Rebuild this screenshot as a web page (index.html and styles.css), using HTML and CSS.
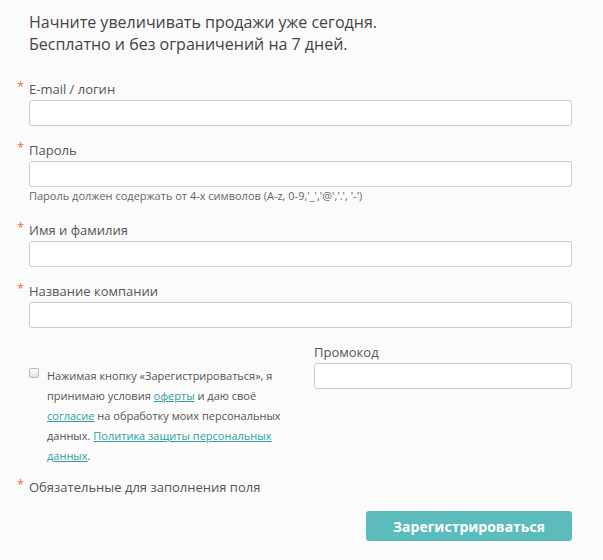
FILE: index.html
```html
<!DOCTYPE html>
<html lang="ru">
<head>
<meta charset="utf-8">
<title>Регистрация</title>
<link rel="stylesheet" href="styles.css">
</head>
<body>
<form class="reg">
  <h1 class="reg-title">Начните увеличивать продажи уже сегодня.<br>Бесплатно и без ограничений на 7 дней.</h1>

  <div class="field">
    <label class="label"><span class="req">*</span>E-mail / логин</label>
    <input class="input" type="text">
  </div>

  <div class="field">
    <label class="label"><span class="req">*</span>Пароль</label>
    <input class="input" type="password">
    <div class="hint">Пароль должен содержать от 4-х символов (A-z, 0-9,'_','@','.', '-')</div>
  </div>

  <div class="field">
    <label class="label"><span class="req">*</span>Имя и фамилия</label>
    <input class="input" type="text">
  </div>

  <div class="field">
    <label class="label"><span class="req">*</span>Название компании</label>
    <input class="input" type="text">
  </div>

  <div class="split">
    <div class="agree">
      <span class="check"></span>
      <p class="agree-text">Нажимая кнопку «Зарегистрироваться», я принимаю условия <a href="#">оферты</a> и даю своё <a href="#">согласие</a> на обработку моих персональных данных. <a href="#">Политика защиты персональных данных</a>.</p>
    </div>
    <div class="field promo">
      <label class="label">Промокод</label>
      <input class="input" type="text">
    </div>
  </div>

  <p class="required"><span class="req">*</span>Обязательные для заполнения поля</p>

  <div class="actions">
    <button class="btn" type="button">Зарегистрироваться</button>
  </div>
</form>
</body>
</html>
```

FILE: styles.css
```css
html, body {
  margin: 0;
  padding: 0;
  background: #fbfbfb;
}
body {
  font-family: "Open Sans", "Liberation Sans", sans-serif;
  color: #555;
}
.reg {
  width: 543px;
  padding: 11px 31px 0 29px;
}
.reg-title {
  margin: 0 0 25px;
  font-size: 16px;
  line-height: 22px;
  font-weight: 400;
  color: #444;
}
.field {
  display: flex;
  flex-direction: column;
  margin-bottom: 15px;
}
.label {
  font-size: 13px;
  line-height: 18px;
  margin-bottom: 2px;
  color: #555;
}
.req {
  display: inline-block;
  width: 12px;
  margin-left: -12px;
  color: #f26b4a;
  font-size: 13px;
  line-height: 13px;
  vertical-align: top;
}
.input {
  box-sizing: border-box;
  width: 100%;
  height: 26px;
  margin: 0;
  border: 1px solid #ccc;
  border-radius: 3px;
  background: #fff;
  font: inherit;
}
.hint {
  margin-top: 1px;
  margin-bottom: 3px;
  font-size: 11px;
  line-height: 15px;
  color: #666;
}
.split {
  display: grid;
  grid-template-columns: 1fr 258px;
  column-gap: 27px;
}
.promo {
  margin-bottom: 0;
}
.agree {
  display: flex;
  align-items: flex-start;
  padding-top: 23px;
}
.check {
  flex: none;
  box-sizing: border-box;
  width: 10px;
  height: 10px;
  margin-top: 2px;
  margin-right: 8px;
  border: 1px solid #bbb;
  border-radius: 2px;
  background: linear-gradient(#fff, #e2e2e2);
}
.agree-text {
  margin: 0;
  font-size: 11px;
  line-height: 20px;
  color: #555;
}
.agree-text a {
  color: #2e9fa0;
  text-decoration: underline;
}
.required {
  margin: 12px 0 0;
  font-size: 13px;
  line-height: 18px;
  color: #555;
}
.actions {
  display: flex;
  justify-content: flex-end;
  margin-top: 15px;
}
.btn {
  width: 206px;
  height: 30px;
  border: 0;
  border-radius: 3px;
  background: #5bbcbb;
  color: #fff;
  font-family: "Open Sans", "Liberation Sans", sans-serif;
  font-weight: 700;
  font-size: 14px;
  padding: 0;
}
```
